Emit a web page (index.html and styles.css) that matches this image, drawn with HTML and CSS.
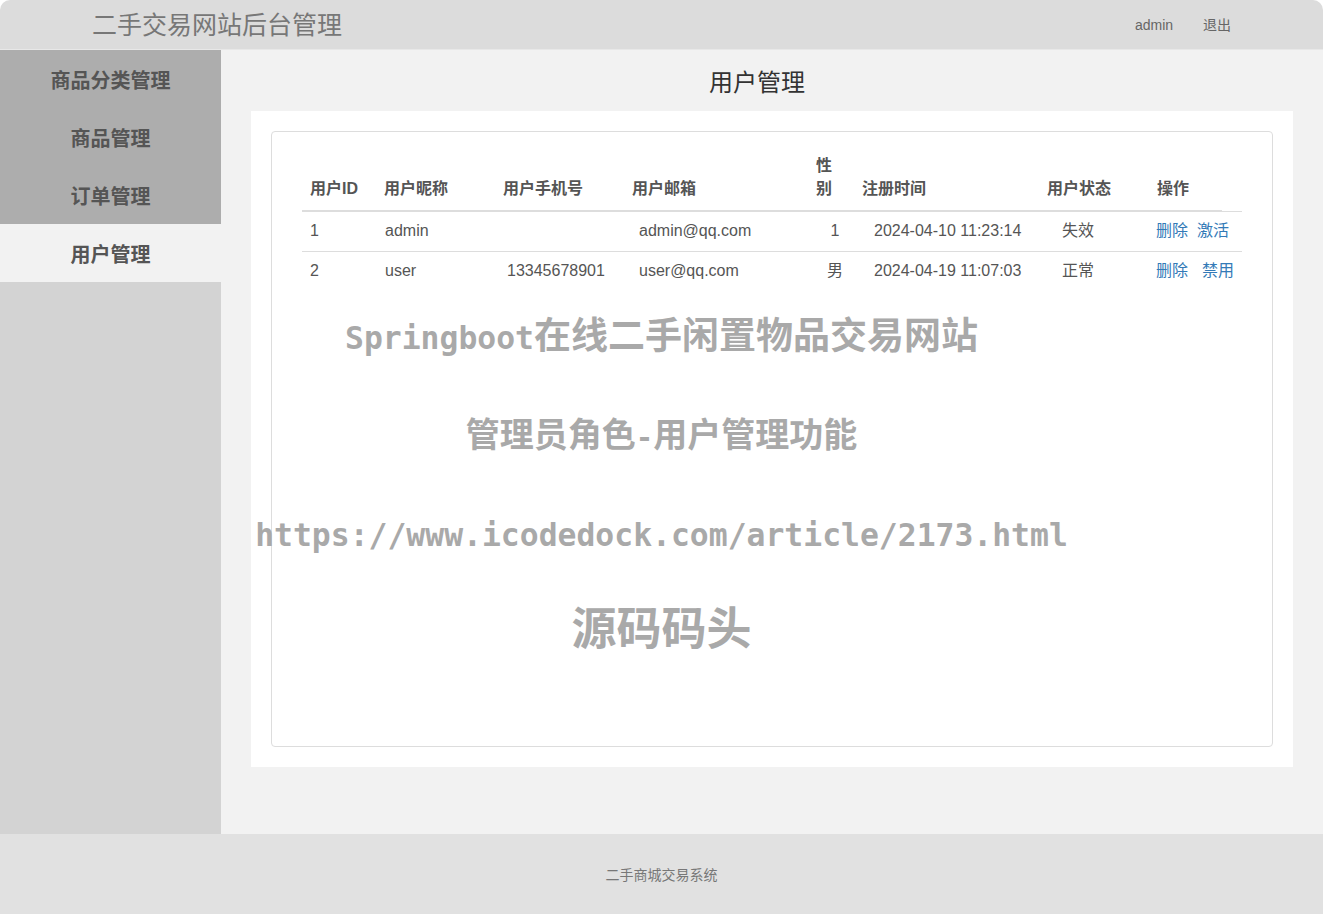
FILE: index.html
```html
<!DOCTYPE html>
<html lang="zh-CN">
<head>
    <meta charset="UTF-8">
    <meta name="viewport" content="width=device-width, initial-scale=1.0">
    <title>二手交易网站后台管理</title>
    <link rel="stylesheet" href="styles.css">
</head>
<body>

    <div class="page">
        <!-- 顶部 -->
        <div class="header">
            <div class="logo">二手交易网站后台管理</div>
            <div class="user-links">
                <a href="#">admin</a>
                <a href="#">退出</a>
            </div>
        </div>

        <div class="container">
            <!-- 左侧菜单 -->
            <ul class="sidebar">
                <li><a href="#">商品分类管理</a></li>
                <li><a href="#">商品管理</a></li>
                <li><a href="#">订单管理</a></li>
                <li class="active"><a href="#">用户管理</a></li>
            </ul>

            <!-- 内容 -->
            <div class="main">
                <h2 class="page-title">用户管理</h2>
                <div class="panel">
                    <div class="panel-box">
                        <table class="user-table">
                            <colgroup>
                                <col style="width:74px">
                                <col style="width:119px">
                                <col style="width:129px">
                                <col style="width:184px">
                                <col style="width:46px">
                                <col style="width:185px">
                                <col style="width:110px">
                                <col style="width:73px">
                                <col style="width:20px">
                            </colgroup>
                            <thead>
                                <tr>
                                    <th>用户ID</th>
                                    <th>用户昵称</th>
                                    <th>用户手机号</th>
                                    <th>用户邮箱</th>
                                    <th>性别</th>
                                    <th>注册时间</th>
                                    <th>用户状态</th>
                                    <th>操作</th>
                                    <th class="th-empty"></th>
                                </tr>
                            </thead>
                            <tbody>
                                <tr>
                                    <td>1</td>
                                    <td>admin</td>
                                    <td></td>
                                    <td>admin@qq.com</td>
                                    <td>1</td>
                                    <td>2024-04-10 11:23:14</td>
                                    <td>失效</td>
                                    <td colspan="2" class="ops"><a href="#">删除</a><a href="#" class="op2">激活</a></td>
                                </tr>
                                <tr>
                                    <td>2</td>
                                    <td>user</td>
                                    <td>13345678901</td>
                                    <td>user@qq.com</td>
                                    <td>男</td>
                                    <td>2024-04-19 11:07:03</td>
                                    <td>正常</td>
                                    <td colspan="2" class="ops"><a href="#">删除</a><a href="#" class="op2 wide">禁用</a></td>
                                </tr>
                            </tbody>
                        </table>
                    </div>
                </div>
            </div>
        </div>

        <!-- 底部 -->
        <div class="footer">二手商城交易系统</div>

        <!-- 水印 -->
        <div class="watermark">
            <div class="wm-line"><span class="wm-latin">Springboot</span>在线二手闲置物品交易网站</div>
            <div class="wm-line wm-small">管理员角色<span class="wm-latin">-</span>用户管理功能</div>
            <div class="wm-line wm-url"><span class="wm-latin">https://www.icodedock.com/article/2173.html</span></div>
            <div class="wm-line wm-big">源码码头</div>
        </div>
    </div>

</body>
</html>
```

FILE: styles.css
```css
* {
    box-sizing: border-box;
}

body {
    margin: 0;
    font-family: 'Liberation Sans', Arial, 'Noto Sans CJK SC', sans-serif;
    background-color: #fff;
    color: #555;
}

a {
    text-decoration: none;
}

.page {
    position: relative;
    height: 100vh;
    display: flex;
    flex-direction: column;
    border-radius: 10px 10px 0 0;
    overflow: hidden;
}

/* 顶部 */
.header {
    height: 50px;
    flex-shrink: 0;
    display: flex;
    align-items: center;
    justify-content: space-between;
    background-color: #dcdcdc;
    border-bottom: 1px solid #e8e8e8;
}

.logo {
    margin-left: 92px;
    margin-top: -3px;
    font-size: 25px;
    color: #777;
}

.user-links {
    margin-right: 92px;
    margin-top: -2px;
    font-size: 14px;
}

.user-links a {
    color: #666;
    margin-left: 26px;
}

/* 主体 */
.container {
    flex: 1;
    display: flex;
}

.sidebar {
    width: 221px;
    margin: 0;
    padding: 0;
    list-style: none;
    background-color: #d3d3d3;
}

.sidebar li {
    height: 58px;
    display: flex;
    align-items: center;
    justify-content: center;
    background-color: #adadad;
}

.sidebar li a {
    font-size: 20px;
    font-weight: bold;
    color: #555;
}

.sidebar li.active {
    background-color: #f2f2f2;
}

.main {
    flex: 1;
    background-color: #f2f2f2;
    padding: 0 30px;
}

.page-title {
    margin: 0 0 0 -30px;
    padding: 18px 0 13px;
    line-height: 30px;
    font-size: 24px;
    font-weight: normal;
    color: #333;
    text-align: center;
}

.panel {
    background-color: #fff;
    padding: 20px;
}

.panel-box {
    height: 616px;
    border: 1px solid #ddd;
    border-radius: 4px;
    padding: 14px 30px;
}

/* 表格 */
.user-table {
    width: 940px;
    table-layout: fixed;
    border-collapse: separate;
    border-spacing: 0;
    font-size: 16px;
    line-height: 23px;
}

.user-table th {
    text-align: left;
    vertical-align: bottom;
    font-weight: bold;
    color: #555;
    padding: 8px 8px 10px;
    border-bottom: 2px solid #ddd;
}

.user-table th.th-empty {
    border-bottom: 1px solid #ddd;
}

.user-table td {
    padding: 7px 8px 9px;
    color: #555;
    white-space: nowrap;
}

.user-table tbody tr + tr td {
    border-top: 1px solid #ddd;
}

.user-table td:nth-child(2) { padding-left: 9px; }
.user-table td:nth-child(3) { padding-left: 12px; }
.user-table td:nth-child(4) { padding-left: 15px; }
.user-table td:nth-child(5) { text-align: center; padding-left: 12px; padding-right: 4px; }
.user-table td:nth-child(6) { padding-left: 20px; }
.user-table td:nth-child(7) { padding-left: 23px; }

.user-table td.ops {
    padding-left: 7px;
}

.ops a {
    color: #337ab7;
}

.ops .op2 {
    margin-left: 9px;
}

.ops .op2.wide {
    margin-left: 14px;
}

/* 底部 */
.footer {
    height: 80px;
    flex-shrink: 0;
    background-color: #e1e1e1;
    display: flex;
    align-items: center;
    justify-content: center;
    padding-bottom: 1px;
    font-size: 14px;
    color: #777;
}

/* 水印 */
.watermark {
    position: absolute;
    top: 283px;
    left: 0;
    right: 0;
    text-align: center;
    color: #a9a9a9;
    font-weight: bold;
    font-family: 'Noto Sans CJK SC', sans-serif;
    font-size: 37px;
    pointer-events: none;
}

.wm-line {
    height: 100px;
    line-height: 100px;
    white-space: nowrap;
}

.wm-latin {
    font-family: 'DejaVu Sans Mono', 'Liberation Mono', monospace;
    font-size: 31.4px;
}

.wm-small {
    font-size: 34px;
}

.wm-small .wm-latin {
    font-size: 29px;
}

.wm-url {
    line-height: 94px;
}

.wm-big {
    margin-top: -7px;
    font-size: 45px;
}
```
